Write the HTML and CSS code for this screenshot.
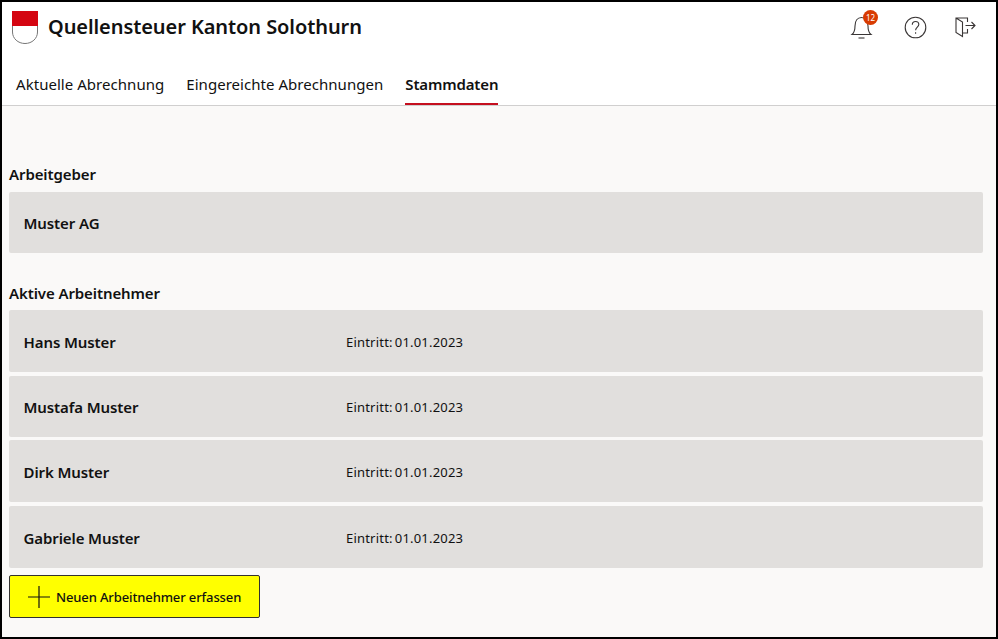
FILE: index.html
```html
<!DOCTYPE html>
<html lang="de">
<head>
<meta charset="utf-8">
<title>Quellensteuer Kanton Solothurn</title>
<link rel="stylesheet" href="styles.css">
</head>
<body>
<div class="frame">
  <header class="header">
    <div class="topbar">
      <div class="brand">
        <svg class="crest" width="28" height="33" viewBox="0 0 28 33"><path d="M1.500 .5H26.500V21C26.500 27.500 21 32.500 14 32.500S1.500 27.500 1.500 21Z" fill="#fff" stroke="#777"/><path d="M1 0H27V15H1Z" fill="#d40511"/></svg>
        <h1 class="title">Quellensteuer Kanton Solothurn</h1>
      </div>
      <div class="actions">
        <div class="bell">
          <svg width="24" height="26" viewBox="0 0 24 26" fill="none" stroke="#3a3636" stroke-width="1.100"><path d="M2 20.500C4.500 18.500 5 16 5 12C5 7 7.500 3.500 11.500 3.500S18 7 18 12C18 16 18.500 18.500 21 20.500Z"/><path d="M8.500 24H14.500"/></svg>
          <span class="badge">12</span>
        </div>
        <svg class="help" width="23" height="23" viewBox="0 0 23 23" fill="none" stroke="#3a3636" stroke-width="1.100"><circle cx="11.500" cy="11.500" r="10.300"/><path d="M8.300 8.700C8.300 6.700 9.800 5.500 11.600 5.500S14.800 6.700 14.800 8.500C14.800 11 11.600 11.300 11.600 14.200"/><path d="M11.600 16.300V17.800"/></svg>
        <svg class="exit" width="21" height="21" viewBox="0 0 21 21" fill="none" stroke="#3a3636" stroke-width="1.100"><path d="M12.500 5V1H1V15.500L7.500 19.500V5L1 1"/><path d="M7.500 16H12.500V12"/><path d="M10.500 8.500H20M16.500 5L20 8.500L16.500 12"/></svg>
      </div>
    </div>
    <nav class="tabs">
      <a class="tab">Aktuelle Abrechnung</a>
      <a class="tab">Eingereichte Abrechnungen</a>
      <a class="tab active">Stammdaten</a>
    </nav>
  </header>
  <main class="content">
    <h2 class="section-title first">Arbeitgeber</h2>
    <div class="card tall"><span class="name">Muster AG</span></div>
    <h2 class="section-title second">Aktive Arbeitnehmer</h2>
    <div class="list">
      <div class="card"><span class="name">Hans Muster</span><span class="date">Eintritt: 01.01.2023</span></div>
      <div class="card short"><span class="name">Mustafa Muster</span><span class="date">Eintritt: 01.01.2023</span></div>
      <div class="card"><span class="name">Dirk Muster</span><span class="date">Eintritt: 01.01.2023</span></div>
      <div class="card"><span class="name">Gabriele Muster</span><span class="date">Eintritt: 01.01.2023</span></div>
    </div>
    <button class="add" type="button">
      <svg width="22" height="22" viewBox="0 0 22 22" stroke="#111" stroke-width="1.200"><path d="M0 11H22M11 0V22"/></svg>
      Neuen Arbeitnehmer erfassen
    </button>
  </main>
</div>
</body>
</html>
```
FILE: styles.css
```css
* { box-sizing: border-box; }
html, body { margin: 0; height: 100%; }
body {
  font-family: "Noto Sans", "Open Sans", "Liberation Sans", sans-serif;
  color: #111;
  overflow: hidden;
}
.frame {
  width: 998px;
  height: 639px;
  border: 2px solid #000;
  background: #faf9f8;
  display: flex;
  flex-direction: column;
}
.header {
  height: 104px;
  background: #fff;
  border-bottom: 1px solid #d0cfcf;
}
.topbar {
  height: 62px;
  display: flex;
  justify-content: space-between;
  align-items: flex-start;
}
.brand { display: flex; align-items: center; padding: 8px 0 0 9px; }
.crest { display: block; }
.title {
  margin: 0 0 0 9px;
  font-size: 20px;
  font-weight: 600;
  line-height: 34px;
  letter-spacing: -.08px;
}
.actions { display: flex; align-items: center; padding: 12px 20px 0 0; }
.bell { position: relative; width: 24px; height: 26px; left: 1px; }
.bell svg { display: block; }
.badge {
  position: absolute;
  left: 13px;
  top: -4px;
  width: 15px;
  height: 15px;
  border-radius: 50%;
  background: #d83b01;
  color: #fff;
  font-size: 8px;
  line-height: 15px;
  text-align: center;
}
.help { margin-left: 31px; }
.exit { margin-left: 28px; }
.tabs { display: flex; padding-left: 14px; gap: 22px; height: 41px; }
.tab {
  font-size: 15px;
  line-height: 20px;
  padding-top: 10px;
  height: 41px;
  letter-spacing: .04px;
}
.tab.active {
  font-weight: 600;
  letter-spacing: -.15px;
  border-bottom: 2px solid #c50f1f;
}
.content { padding: 0 13px 0 7px; }
.section-title {
  margin: 0;
  font-size: 15px;
  font-weight: 600;
  line-height: 20px;
  letter-spacing: -.1px;
}
.first { padding-top: 58px; height: 86px; }
.second { padding-top: 30px; height: 57px; }
.card {
  height: 62px;
  background: #e1dfdd;
  border-radius: 2px;
  display: flex;
  align-items: center;
  padding-left: 14.500px;
}
.card.tall { height: 61px; }
.card.short { height: 61px; }
.list { display: flex; flex-direction: column; gap: 3.700px; }
.list .card { padding-top: 1px; }
.name {
  width: 322.500px;
  font-size: 15px;
  font-weight: 600;
  letter-spacing: -.1px;
}
.date {
  font-size: 13px;
  letter-spacing: .2px;
  word-spacing: -1.500px;
}
.add {
  margin-top: 7px;
  width: 251px;
  height: 43px;
  display: flex;
  align-items: center;
  gap: 6px;
  padding: 0 0 0 18px;
  background: #ff0;
  border: 1px solid #323130;
  border-radius: 2px;
  font: 500 13px "Noto Sans", "Open Sans", sans-serif;
  letter-spacing: -.12px;
  color: #111;
}
```
